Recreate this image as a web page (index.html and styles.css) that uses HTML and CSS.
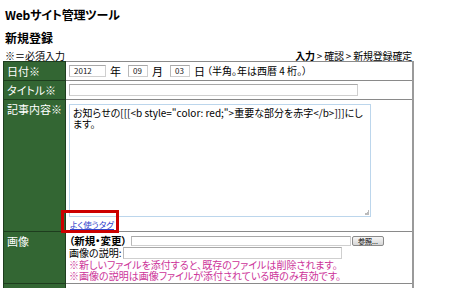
FILE: index.html
```html
<!DOCTYPE html>
<html lang="ja">
<head>
<meta charset="utf-8">
<link rel="stylesheet" href="styles.css">
</head>
<body>
<div class="page">
  <h1 class="title">Webサイト管理ツール</h1>
  <h2 class="subtitle">新規登録</h2>
  <div class="meta">
    <span class="req">※＝必須入力</span>
    <span class="crumbs"><b>入力</b> &gt; 確認 &gt; 新規登録確定</span>
  </div>
  <table class="form">
    <tr class="r-date">
      <th>日付※</th>
      <td>
        <div class="date">
          <span class="inp w-year">2012</span><span class="unit">年</span>
          <span class="inp w-md">09</span><span class="unit">月</span>
          <span class="inp w-md">03</span><span class="unit u-day">日</span>
          <span class="note">（半角。年は西暦 4 桁。）</span>
        </div>
      </td>
    </tr>
    <tr class="r-title">
      <th>タイトル※</th>
      <td><span class="inp w-title"></span></td>
    </tr>
    <tr class="r-body">
      <th>記事内容※</th>
      <td>
        <div class="textarea">お知らせの[[[&lt;b style="color: red;"&gt;重要な部分を赤字&lt;/b&gt;]]]にします。<span class="grip"></span></div>
        <div class="tagline"><a class="taglink">よく使うタグ</a><span class="hl"></span></div>
      </td>
    </tr>
    <tr class="r-image">
      <th>画像</th>
      <td>
        <div class="file">
          <b class="paren">（新規・変更）</b><span class="inp w-file"></span><span class="btn">参照...</span>
        </div>
        <div class="desc">画像の説明:<span class="inp w-desc"></span></div>
        <div class="warn">※新しいファイルを添付すると、既存のファイルは削除されます。</div>
        <div class="warn">※画像の説明は画像ファイルが添付されている時のみ有効です。</div>
      </td>
    </tr>
    <tr class="r-next">
      <th></th>
      <td></td>
    </tr>
  </table>
</div>
</body>
</html>
```

FILE: styles.css
```css
* { box-sizing: border-box; }
html, body { margin: 0; padding: 0; background: #fff; }
body {
  font-family: "Noto Sans CJK JP", "DejaVu Sans", sans-serif;
  font-feature-settings: "palt";
  font-size: 10px;
  color: #000;
  overflow: hidden;
  height: 288px;
}
.page { padding: 8px 0 0 5px; width: 416px; }
.title { font-size: 12px; font-weight: bold; margin: 0; line-height: 14px; height: 14px; letter-spacing: -0.2px; }
.subtitle { font-size: 12px; font-weight: bold; margin: 9px 0 0; line-height: 14px; height: 14px; }
.meta { display: flex; justify-content: space-between; align-items: flex-end; margin-top: 5px; height: 11px; line-height: 11px; font-size: 10px; padding-right: 4px; }
.crumbs { letter-spacing: -0.2px; }
.form {
  border-collapse: collapse;
  width: 411px;
  margin-left: -2px;
  border-right: 2px solid #9a9a9a;
  border-left: 1px solid #bbb;
}
.form th {
  background: #336633;
  color: #fff;
  font-weight: normal;
  text-align: left;
  vertical-align: top;
  white-space: nowrap;
  width: 61px;
  padding: 3px 3px 0;
  border: 1px solid #1e3d1e;
  font-size: 11px;
  line-height: 13px;
}
.form td {
  vertical-align: top;
  padding: 0 0 0 3px;
  border-top: 1px solid #8a8a8a;
  border-bottom: 1px solid #8a8a8a;
}
.r-date th, .r-date td { height: 19px; }
.r-title th, .r-title td { height: 19px; }
.r-body th, .r-body td { height: 132px; }
.r-image th, .r-image td { height: 52px; }
.r-next th, .r-next td { height: 10px; }
.inp {
  display: inline-block;
  height: 12px;
  border: 1px solid #cfcfcf;
  border-top-color: #a8a8a8;
  border-left-color: #b8b8b8;
  background: #fff;
  font-size: 8px;
  line-height: 10px;
  padding-left: 4px;
  color: #222;
}
.date { display: flex; align-items: center; height: 17px; }
.w-year { width: 37px; }
.w-md { width: 20px; }
.unit { display: inline-block; margin: 0 7px 0 4px; font-size: 11px; line-height: 12px; }
.u-day { margin-right: 2px; }
.note { font-size: 10px; }
.w-title { width: 289px; height: 12px; margin-top: 3px; display: block; }
.textarea {
  position: relative;
  width: 302px;
  height: 113px;
  margin-top: 4px;
  border: 1px solid #bcd6ec;
  padding: 2px 5px 0 3px;
  font-size: 10px;
  line-height: 11px;
  word-break: break-all;
}
.grip {
  position: absolute; right: 1px; bottom: 1px;
  width: 5px; height: 5px;
  background: linear-gradient(135deg, transparent 50%, #bbb 50%);
}
.tagline { height: 14px; position: relative; padding: 0 0 0 1px; margin-top: -1px; }
.taglink { color: #3344cc; text-decoration: underline; font-size: 8.5px; line-height: 10px; display: inline-block; }
.hl {
  position: absolute;
  left: -8px; top: -6px;
  width: 58px; height: 23px;
  border: 3px solid #cc0000;
}
.file { display: flex; align-items: center; height: 12px; margin-top: 3px; }
.paren { font-size: 10.5px; width: 62px; line-height: 12px; }
.w-file { width: 220px; height: 10px; }
.btn {
  display: inline-block;
  width: 32px; height: 10px;
  border: 1px solid #8a8a8a;
  border-radius: 2px;
  background: linear-gradient(#f6f6f6, #d6d6d6);
  font-size: 7px; line-height: 8px; text-align: center;
  margin-left: 1px;
}
.desc { display: flex; align-items: center; height: 12px; font-size: 10px; line-height: 12px; }
.w-desc { width: 219px; height: 12px; margin-left: 2px; }
.warn { color: #cc3399; font-size: 10px; line-height: 11px; height: 11px; }
```
